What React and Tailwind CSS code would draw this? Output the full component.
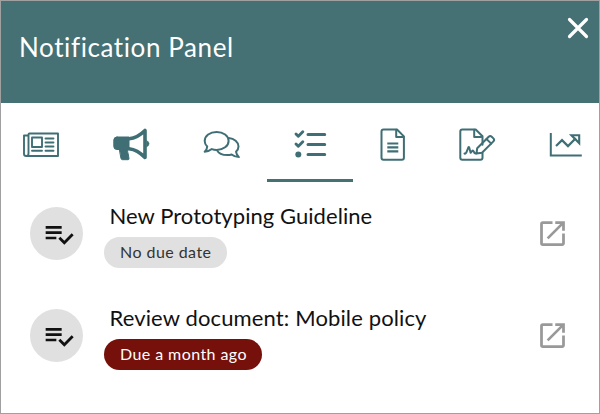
const iconProps = {
  width: 48,
  height: 48,
  viewBox: "0 0 48 48",
  fill: "none",
  stroke: "currentColor",
  strokeWidth: 2,
  strokeLinecap: "round",
  strokeLinejoin: "round",
};

const NewsIcon = () => (
  <svg {...iconProps} strokeWidth="1.9">
    <path d="M11.5 32.500V13.500q0-1 1-1H41v22.500H9.2Q7 35 7 33V14.500h4.300M11.500 32.500q0 2.500-2.300 2.500" />
    <rect x="15" y="16.500" width="10" height="9.500" />
    <path d="M28.500 17.500h8M28.500 21.500h8M28.500 25.500h8M15 29.800h10M28.500 29.800h8" />
  </svg>
);

const MegaphoneIcon = () => (
  <svg {...iconProps}>
    <path d="M10 16H22v12.500H10Q6.800 28.500 6.800 25.500v-6.500Q6.800 16 10 16Z" fill="currentColor" strokeWidth="1" />
    <path d="M12.700 28.500H21q-.8 2.200.2 4.500l.8 4.500q.2 1-.8 1.200h-5.700q-1.200 0-1.500-1.200Z" fill="currentColor" strokeWidth="1" />
    <path d="M22 17.800q8.500-.8 16-8.300v27q-7.500-7.800-16-8.800" strokeWidth="3.600" />
    <path d="M39.500 19.500q2.600 1 2.600 3.200t-2.600 3.200Z" fill="currentColor" strokeWidth="0.500" />
  </svg>
);

const ChatIcon = () => (
  <svg {...iconProps} strokeWidth="2">
    <path d="M7.200 25.500C5.500 23.800 4.700 22 4.700 19.900c0-5 5.200-9 11.900-9s12 4 12 9-5.300 9.100-12 9.100c-1.800 0-3.300-.3-4.800-.9Q8.700 30.700 4.700 30.700 7.200 28.200 7.200 25.500Z" />
    <path d="M28.800 17c5.300.6 9.700 4.100 9.700 8.500 0 2-.9 3.700-2.500 5.200q.3 2.800 2.900 5.400-4 0-7.300-2.600c-1.300.4-2.700.6-4.200.6-4.800 0-9-2-10.500-5" />
  </svg>
);

const TasksIcon = () => (
  <svg {...iconProps}>
    <path d="M10 13l2.300 2.300 4.500-4.500M10 23l2.300 2.300 4.500-4.500" strokeWidth="2.900" />
    <path d="M22 13.500h16.700M22 23.500h16.700M22 33.400h16.700" strokeWidth="3" />
    <circle cx="12.300" cy="33.400" r="3" fill="currentColor" stroke="none" />
  </svg>
);

const DocumentIcon = () => (
  <svg {...iconProps}>
    <path d="M14.500 8.500H28l6.900 6.900v21.300q0 2-2 2H14.500q-2 0-2-2V10.500q0-2 2-2Z" />
    <path d="M27.200 8.800v7.300h7.300" />
    <path d="M18.300 22.500h11M18.300 26.400h11M18.300 30.400h11" strokeLinecap="butt" strokeWidth="2.100" />
  </svg>
);

const SignatureIcon = () => (
  <svg {...iconProps}>
    <path d="M29.500 23.800V15.300l-6.800-6.800H9.300q-2 0-2 2v26.200q0 2 2 2h18.200q2 0 2-2V32" />
    <path d="M21.200 8.800v7.300h7" />
    <path d="M11.500 32.500q1.300.5 2-1.300l1.800-4.700q.5-1 .9 0l1.400 5.300 1.700-2q.8-.7 1.300.5.400 2 2.400 2.200" />
    <path d="M23.500 32.500l.7-5.300L35.700 15.700q1.500-1.500 3 0l1.700 1.700q1.500 1.500 0 3L29 31.800Z" />
    <path d="M33.500 18l4.700 4.700" strokeWidth="1.900" />
  </svg>
);

const TrendIcon = () => (
  <svg {...iconProps} strokeLinejoin="miter">
    <path d="M14.800 12v22.600h31" strokeLinecap="butt" strokeWidth="2" />
    <path d="M20.800 24.300l5.200-5.200 6 6 7-7" strokeLinecap="square" strokeWidth="2.200" />
    <path d="M35.400 14.300h7.800v7.800Z" strokeWidth="2.100" />
  </svg>
);

const tabs = [
  { label: "News", Icon: NewsIcon, width: "w-20" },
  { label: "Announcements", Icon: MegaphoneIcon, width: "w-[100px]" },
  { label: "Discussions", Icon: ChatIcon, width: "w-[86px]" },
  { label: "Tasks", Icon: TasksIcon, width: "w-[86px]", active: true },
  { label: "Documents", Icon: DocumentIcon, width: "w-20" },
  { label: "Signatures", Icon: SignatureIcon, width: "w-[88px]" },
  { label: "Reports", Icon: TrendIcon, width: "w-[78px]" },
];

const items = [
  { title: "New Prototyping Guideline", titleSpacing: "tracking-[0.06px]", due: "No due date", badge: "w-[123px] bg-[#e0e0e0] text-[#333] tracking-[0.45px]" },
  { title: "Review document: Mobile policy", titleSpacing: "tracking-[0.13px]", due: "Due a month ago", badge: "w-[158px] bg-[#75100b] text-white tracking-[0.42px]" },
];

function TaskRow({ title, titleSpacing, due, badge }) {
  return (
    <li className="flex h-[102px] items-start pl-[29px] pr-[30px]">
      <div className="mt-[5px] flex size-[53px] shrink-0 items-center justify-center rounded-full bg-[#e0e0e0] pl-1 text-[#111]">
        <svg width="32" height="32" viewBox="0 0 24 24" fill="currentColor">
          <path d="M14 10H2v2h12v-2zm0-4H2v2h12V6zM2 16h8v-2H2v2zm19.500-4.500L23 13l-6.990 7-4.510-4.500L13 14l3.010 3 5.490-5.500z" />
        </svg>
      </div>
      <div className="ml-[21px] flex-1">
        <h2 className={`h-[35px] whitespace-nowrap pl-[5.500px] text-[22px] leading-[28px] text-[#111] ${titleSpacing}`}>{title}</h2>
        <span className={`flex h-[31px] items-center whitespace-nowrap rounded-full pb-px pl-4 text-[16px] ${badge}`}>{due}</span>
      </div>
      <svg className="mt-[15px] shrink-0 text-[#999]" width="33" height="33" viewBox="0 0 24 24" fill="currentColor">
        <path d="M19 19H5V5h7V3H5a2 2 0 0 0-2 2v14a2 2 0 0 0 2 2h14c1.100 0 2-.9 2-2v-7h-2v7zM14 3v2h3.590l-9.830 9.830 1.410 1.410L19 6.410V10h2V3h-7z" />
      </svg>
    </li>
  );
}

export default function App() {
  return (
    <main className="h-[414px] w-[600px] overflow-hidden border border-[#a0a0a0] bg-white font-[Lato,sans-serif]">
      <header className="flex h-[102px] items-start justify-between bg-[#457074] pl-[18px] pr-[10px] text-white">
        <h1 className="mt-[29px] text-[26px] leading-[34px] tracking-[0.600px]">Notification Panel</h1>
        <button aria-label="Close" className="mt-[16px]">
          <svg width="22" height="22" viewBox="0 0 22 22" fill="none" stroke="currentColor" strokeWidth="3.200" strokeLinecap="round">
            <path d="M2.500 2.500l17 17M19.500 2.500l-17 17" />
          </svg>
        </button>
      </header>
      <nav className="flex h-[79px] text-[#3f6f75]">
        {tabs.map(({ label, Icon, width, active }) => (
          <button key={label} aria-label={label} className={`flex shrink-0 justify-center border-b-3 pt-[18px] ${width} ${active ? "border-[#457074]" : "border-transparent"}`}>
            <Icon />
          </button>
        ))}
      </nav>
      <ul className="pt-5">
        {items.map((item) => (
          <TaskRow key={item.title} {...item} />
        ))}
      </ul>
    </main>
  );
}
